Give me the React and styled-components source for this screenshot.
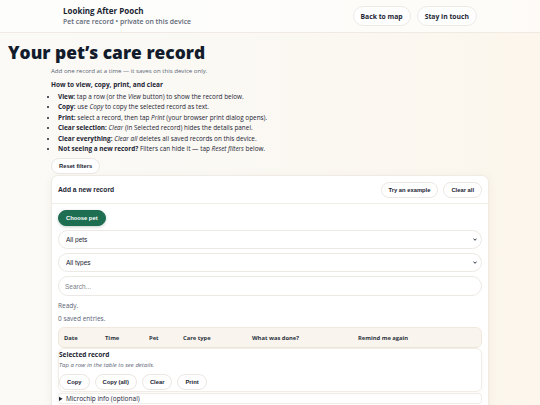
import React from 'react'
import styled, { createGlobalStyle } from 'styled-components'

const GlobalStyle = createGlobalStyle`
  html, body {
    margin: 0;
    padding: 0;
  }
  body {
    font-family: "Open Sans", "Liberation Sans", sans-serif;
    color: #1b2433;
    background: linear-gradient(90deg, #fbfaf7 0%, #fbf8f2 60%, #fcf6ec 100%);
    min-height: 405px;
    overflow: hidden;
  }
`

const TopBar = styled.header`
  border-bottom: 1px solid #f1e9e4;
  background: rgba(255, 255, 255, 0.6);
`

const TopInner = styled.div`
  width: 414px;
  margin: 0 auto;
  height: 32px;
  display: flex;
  align-items: center;
  justify-content: space-between;
`

const Brand = styled.div`
  display: flex;
  flex-direction: column;
  gap: 1px;
`

const BrandName = styled.div`
  font-size: 8px;
  font-weight: 700;
  color: #1b2433;
  line-height: 10px;
`

const BrandSub = styled.div`
  font-size: 6.9px;
  font-weight: 600;
  color: #5f6878;
  line-height: 9px;
`

const NavLinks = styled.nav`
  display: flex;
  gap: 6px;
`

const NavPill = styled.a`
  display: inline-flex;
  align-items: center;
  height: 20px;
  padding: 0 7px;
  border: 1px solid #efe9e6;
  border-radius: 999px;
  background: #fff;
  font-size: 6.8px;
  font-weight: 700;
  color: #1b2433;
  box-sizing: border-box;
`

const Main = styled.main`
  padding: 8px 0 0;
`

const Title = styled.h1`
  margin: 0 0 0 8px;
  font-size: 17.4px;
  font-weight: 800;
  line-height: 22px;
  color: #131c2c;
`

const Content = styled.div`
  margin-left: 51px;
  width: 438px;
`

const Lead = styled.p`
  margin: 3px 0 0;
  font-size: 6.1px;
  line-height: 10px;
  color: #5a6474;
`

const HowTo = styled.p`
  margin: 4px 0 0;
  font-size: 6.5px;
  line-height: 10px;
  font-weight: 700;
`

const Steps = styled.ul`
  margin: 2px 0 0;
  padding-left: 7px;
  font-size: 6.4px;
  line-height: 10.4px;
  color: #1b2433;
  li::marker {
    font-size: 6px;
  }
`

const Pill = styled.button`
  font-family: "Liberation Sans", Arial, sans-serif;
  font-size: 5.8px;
  font-weight: 700;
  height: 16px;
  padding: 0 7px;
  border-radius: 999px;
  border: 1px solid ${p => (p.$primary ? '#1d6b50' : '#ece7e2')};
  background: ${p => (p.$primary ? '#1e6e52' : '#fff')};
  color: ${p => (p.$primary ? '#fff' : '#1b2433')};
  box-shadow: ${p => (p.$primary ? '0 1px 3px rgba(20,80,60,0.25)' : 'none')};
  cursor: pointer;
`

const ButtonRow = styled.div`
  display: flex;
  gap: 5px;
  margin-top: ${p => p.$gap || 0}px;
`

const Card = styled.section`
  margin-top: 1px;
  background: #fff;
  border: 1px solid #f0ebe5;
  border-radius: 7px;
  box-shadow: 0 2px 8px rgba(120, 100, 70, 0.08);
  overflow: hidden;
`

const CardHead = styled.div`
  height: 27px;
  padding: 0 6px;
  display: flex;
  align-items: center;
  justify-content: space-between;
  border-bottom: 1px solid #f1ede8;
`

const CardTitle = styled.h2`
  margin: 0;
  font-family: "Liberation Sans", Arial, sans-serif;
  font-size: 6.7px;
  font-weight: 700;
  color: #1b2433;
`

const CardBody = styled.div`
  padding: 6px 6px 0;
  display: flex;
  flex-direction: column;
`

const FieldStack = styled.div`
  margin-top: 4px;
  display: flex;
  flex-direction: column;
  gap: 4px;
`

const SelectWrap = styled.div`
  position: relative;
  display: flex;
`

const Select = styled.select`
  flex: 1;
  height: 19px;
  appearance: none;
  border: 1px solid #ece8e3;
  border-radius: 999px;
  padding: 0 7px;
  font-family: "Liberation Sans", Arial, sans-serif;
  font-size: 6.5px;
  color: #1b2433;
  background: #fff;
  outline: none;
`

const Chevron = styled.svg`
  position: absolute;
  right: 5px;
  top: 8px;
  width: 4px;
  height: 3px;
  pointer-events: none;
`

const Search = styled.input`
  height: 20px;
  box-sizing: border-box;
  border: 1px solid #ece8e3;
  border-radius: 999px;
  padding: 0 6px;
  font-family: "Liberation Sans", Arial, sans-serif;
  font-size: 6.5px;
  color: #1b2433;
  outline: none;
  &::placeholder {
    color: #7a7f88;
  }
`

const Status = styled.div`
  margin-top: ${p => p.$gap}px;
  font-size: 6.5px;
  line-height: 9px;
  color: #5a6474;
`

const TableHead = styled.div`
  margin-top: 4px;
  height: 19px;
  display: grid;
  grid-template-columns: 41px 44px 34px 69px 106px 1fr;
  align-items: center;
  padding-left: 5px;
  background: #f9f5ee;
  border: 1px solid #f0e8dc;
  border-radius: 6px;
  font-size: 5.8px;
  font-weight: 700;
  color: #2c3340;
`

const Selected = styled.div`
  border: 1px solid #f1ece6;
  border-radius: 6px;
  padding: 1px 0 1px;
  box-shadow: 0 1px 4px rgba(120, 100, 70, 0.06);
`

const SelTitle = styled.div`
  font-size: 6.5px;
  font-weight: 700;
  line-height: 10px;
`

const SelHint = styled.div`
  font-size: 6px;
  font-style: italic;
  line-height: 10px;
  color: #5a6474;
  margin-top: 0;
`

const Details = styled.details`
  margin-top: 1px;
  border: 1px solid #f1ece6;
  border-radius: 3px;
  font-size: 6.5px;
  line-height: 9px;
  summary {
    cursor: pointer;
  }
`

const steps = [
  [<b key="b">View:</b>, <> tap a row (or the <i>View</i> button) to show the record below.</>],
  [<b key="b">Copy:</b>, <> use <i>Copy</i> to copy the selected record as text.</>],
  [<b key="b">Print:</b>, <> select a record, then tap <i>Print</i> (your browser print dialog opens).</>],
  [<b key="b">Clear selection:</b>, <> <i>Clear</i> (in Selected record) hides the details panel.</>],
  [<b key="b">Clear everything:</b>, <> <i>Clear all</i> deletes all saved records on this device.</>],
  [<b key="b">Not seeing a new record?</b>, <> Filters can hide it — tap <i>Reset filters</i> below.</>],
]

const columns = ['Date', 'Time', 'Pet', 'Care type', 'What was done?', 'Remind me again']

function FilterSelect({ label }) {
  return (
    <SelectWrap>
      <Select defaultValue="all">
        <option value="all">{label}</option>
      </Select>
      <Chevron viewBox="0 0 8 6">
        <path d="M1 1.2 4 4.6 7 1.2" fill="none" stroke="#1b2433" strokeWidth="1.8" />
      </Chevron>
    </SelectWrap>
  )
}

export default function App() {
  return (
    <>
      <GlobalStyle />
      <TopBar>
        <TopInner>
          <Brand>
            <BrandName>Looking After Pooch</BrandName>
            <BrandSub>Pet care record • private on this device</BrandSub>
          </Brand>
          <NavLinks>
            <NavPill>Back to map</NavPill>
            <NavPill>Stay in touch</NavPill>
          </NavLinks>
        </TopInner>
      </TopBar>
      <Main>
        <Title>Your pet’s care record</Title>
        <Content>
          <Lead>Add one record at a time — it saves on this device only.</Lead>
          <HowTo>How to view, copy, print, and clear</HowTo>
          <Steps>
            {steps.map((s, i) => (
              <li key={i}>{s[0]}{s[1]}</li>
            ))}
          </Steps>
          <ButtonRow $gap={4}>
            <Pill>Reset filters</Pill>
          </ButtonRow>
          <Card>
            <CardHead>
              <CardTitle>Add a new record</CardTitle>
              <ButtonRow>
                <Pill>Try an example</Pill>
                <Pill>Clear all</Pill>
              </ButtonRow>
            </CardHead>
            <CardBody>
              <ButtonRow>
                <Pill $primary>Choose pet</Pill>
              </ButtonRow>
              <FieldStack>
                <FilterSelect label="All pets" />
                <FilterSelect label="All types" />
                <Search placeholder="Search..." />
              </FieldStack>
              <Status $gap={5}>Ready.</Status>
              <Status $gap={4}>0 saved entries.</Status>
              <TableHead>
                {columns.map(c => (
                  <span key={c}>{c}</span>
                ))}
              </TableHead>
              <Selected>
                <SelTitle>Selected record</SelTitle>
                <SelHint>Tap a row in the table to see details.</SelHint>
                <ButtonRow $gap={4}>
                  <Pill>Copy</Pill>
                  <Pill>Copy (all)</Pill>
                  <Pill>Clear</Pill>
                  <Pill>Print</Pill>
                </ButtonRow>
              </Selected>
              <Details>
                <summary>Microchip info (optional)</summary>
              </Details>
              <Details>
                <summary>Pet info (optional)</summary>
              </Details>
            </CardBody>
          </Card>
        </Content>
      </Main>
    </>
  )
}
